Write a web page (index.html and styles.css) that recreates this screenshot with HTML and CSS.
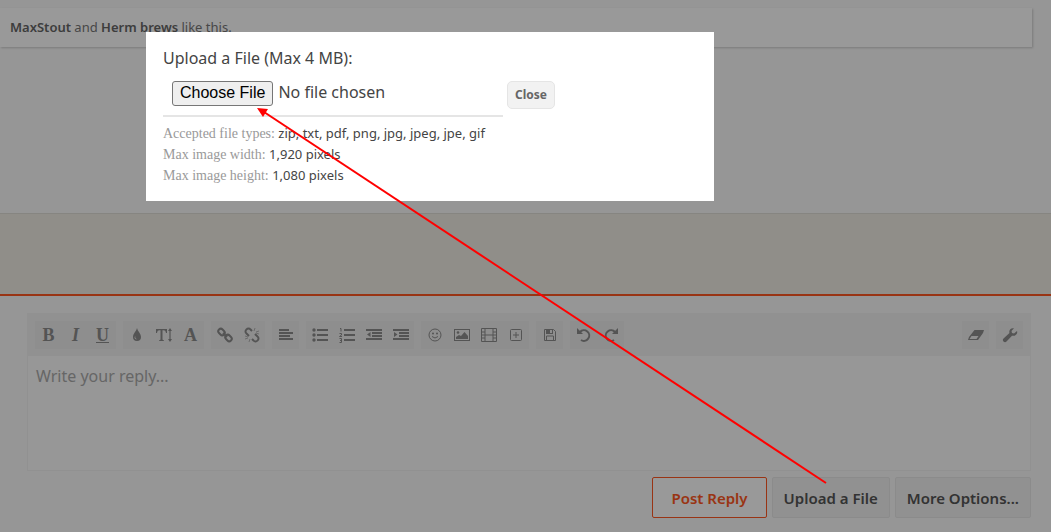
FILE: index.html
```html
<!DOCTYPE html>
<html lang="en">
<head>
    <meta charset="UTF-8">
    <meta name="viewport" content="width=device-width, initial-scale=1.0">
    <title>Reply to Thread</title>
    <link rel="stylesheet" href="styles.css">
</head>
<body>
    <main>
        <section class="message">
            <p class="likes"><a href="#">MaxStout</a> and <a href="#">Herm brews</a> like this.</p>
        </section>
        <form class="quick-reply">
            <div class="editor">
                <div class="toolbar">
                    <div class="group">
                        <button type="button" class="tool letter" aria-label="Bold"><b>B</b></button>
                        <button type="button" class="tool letter" aria-label="Italic"><i>I</i></button>
                        <button type="button" class="tool letter" aria-label="Underline"><u>U</u></button>
                    </div>
                    <div class="group">
                        <button type="button" class="tool" aria-label="Text color"><svg viewBox="0 0 16 16"><path fill-rule="evenodd" d="M8 1C7.500 4 4 6.500 4 10a4 4 0 0 0 8 0C12 6.500 8.500 4 8 1zM6.500 9a1.500 1.500 0 1 0 1.500 3 2 2 0 0 1-1.500-3z"/></svg></button>
                        <button type="button" class="tool" aria-label="Font size"><svg viewBox="0 0 16 16"><path d="M0 2h11v4h-1c-.3-2-1-2.700-2.500-2.700H6.500V12c0 1 .5 1.200 1.500 1.300v.7H3v-.7c1-.1 1.500-.3 1.500-1.300V3.300H3.500C2 3.300 1.300 4 1 6H0zM14 1l2 3h-1.400v8H16l-2 3-2-3h1.400V4H12z"/></svg></button>
                        <button type="button" class="tool letter" aria-label="Font family"><b>A</b></button>
                    </div>
                    <div class="group">
                        <button type="button" class="tool" aria-label="Link"><svg viewBox="0 0 16 16" class="line bold"><rect x="1" y="2.500" width="7" height="5" rx="2.500" transform="rotate(45 4.500 5)"/><rect x="8" y="8.500" width="7" height="5" rx="2.500" transform="rotate(45 11.500 11)"/><path d="M6 6l4 4"/></svg></button>
                        <button type="button" class="tool" aria-label="Unlink"><svg viewBox="0 0 16 16" class="line bold"><path d="M8 4L6.500 2.500a2.500 2.500 0 0 0-4 0 2.500 2.500 0 0 0 0 4L5 9M8 12l1.500 1.500a2.500 2.500 0 0 0 4 0 2.500 2.500 0 0 0 0-4L11 7"/><path stroke-width=".6" d="M10 4l1-3M12 5l3-1M6 12l-1 3M4 11l-3 1M12 6l3 1M4 10l-3-1"/></svg></button>
                    </div>
                    <div class="group">
                        <button type="button" class="tool" aria-label="Alignment"><svg viewBox="0 0 16 16"><path d="M1 2h10v2H1zM1 5h14v2H1zM1 8h11v2H1zM1 11h14v2H1z"/></svg></button>
                    </div>
                    <div class="group">
                        <button type="button" class="tool" aria-label="Unordered list"><svg viewBox="0 0 16 16"><circle cx="2" cy="3" r="1.700"/><circle cx="2" cy="8" r="1.700"/><circle cx="2" cy="13" r="1.700"/><path d="M5 2h11v2H5zM5 7h11v2H5zM5 12h11v2H5z"/></svg></button>
                        <button type="button" class="tool" aria-label="Ordered list"><svg viewBox="0 0 16 16"><path d="M5 2h11v2H5zM5 7h11v2H5zM5 12h11v2H5z"/><path class="line" d="M1 1.500h1v3M.5 6.500h2v1.500l-2 1.500h2.500M.5 11.500h2v4h-2M1 13.500h1.500"/></svg></button>
                        <button type="button" class="tool" aria-label="Outdent"><svg viewBox="0 0 16 16"><path d="M0 2h16v2H0zM6 5h10v2H6zM6 8h10v2H6zM0 11h16v2H0zM4.500 5v5L1 7.500z"/></svg></button>
                        <button type="button" class="tool" aria-label="Indent"><svg viewBox="0 0 16 16"><path d="M0 2h16v2H0zM6 5h10v2H6zM6 8h10v2H6zM0 11h16v2H0zM1 5v5l3.500-2.500z"/></svg></button>
                    </div>
                    <div class="group">
                        <button type="button" class="tool" aria-label="Smilies"><svg viewBox="0 0 16 16"><circle class="line" cx="8" cy="8" r="6"/><circle cx="6" cy="6.500" r="1"/><circle cx="10" cy="6.500" r="1"/><path class="line" d="M5 9.500q3 3 6 0"/></svg></button>
                        <button type="button" class="tool" aria-label="Image"><svg viewBox="0 0 16 16"><rect class="line" x=".5" y="2.500" width="15" height="11"/><circle cx="4" cy="5.500" r="1.300"/><path d="M2 12v-2l3-2 2 1 3.500-4L14 9v3z"/></svg></button>
                        <button type="button" class="tool" aria-label="Media"><svg viewBox="0 0 16 16"><path class="line" d="M.5 1.500h15v13H.5zM4 2v12M12 2v12M4 8h8M1 5h3M1 8h3M1 11h3M12 5h3M12 8h3M12 11h3"/></svg></button>
                        <button type="button" class="tool" aria-label="Insert"><svg viewBox="0 0 16 16"><rect class="line" x="2.500" y="2.500" width="11" height="11" rx="1"/><path class="line" d="M8 5v6M5 8h6"/></svg></button>
                    </div>
                    <div class="group">
                        <button type="button" class="tool" aria-label="Drafts"><svg viewBox="0 0 16 16"><path class="line" d="M2.500 2.500h9l2 2v9h-11zM4.500 13V9h7v4"/><path d="M4 2h7v5H4zM8 3v3h2V3z" fill-rule="evenodd"/></svg></button>
                    </div>
                    <div class="group">
                        <button type="button" class="tool" aria-label="Undo"><svg viewBox="0 0 16 16"><path class="line heavy" d="M4 5a5.300 5.300 0 1 1 1 8"/><path d="M1 1v6h6z"/></svg></button>
                        <button type="button" class="tool" aria-label="Redo"><svg viewBox="0 0 16 16"><path class="line heavy" d="M12 5a5.300 5.300 0 1 0-1 8"/><path d="M15 1v6H9z"/></svg></button>
                    </div>
                    <div class="group end">
                        <button type="button" class="tool" aria-label="Remove formatting"><svg viewBox="0 0 16 16"><path fill-rule="evenodd" d="M6.500 3H16l-1 3-5 7H0l1-3zM3.500 9L1.500 12h7l2-3z"/></svg></button>
                    </div>
                    <div class="group">
                        <button type="button" class="tool" aria-label="Toggle BB code editor"><svg viewBox="0 0 16 16"><path d="M15 4l-3 2.500-2-.5-.5-2L12 1.300C9 .5 6.500 3 7.500 6L1.500 11.500c-2 2 1 5 3 3L10 8.700c3 .8 6-1.700 5-4.700z"/></svg></button>
                    </div>
                </div>
                <textarea class="reply-text" aria-label="Reply" placeholder="Write your reply..."></textarea>
            </div>
            <div class="actions">
                <button type="submit" class="action primary">Post Reply</button>
                <button type="button" class="action upload">Upload a File</button>
                <button type="button" class="action more">More Options...</button>
            </div>
        </form>
    </main>
    <div class="overlay">
        <section class="dialog" role="dialog" aria-labelledby="upload-label">
            <label id="upload-label" for="upload">Upload a File (Max 4 MB):</label>
            <div class="upload-row">
                <input type="file" id="upload">
                <button type="button" class="close">Close</button>
            </div>
            <dl class="limits">
                <div><dt>Accepted file types:</dt> <dd>zip, txt, pdf, png, jpg, jpeg, jpe, gif</dd></div>
                <div><dt>Max image width:</dt> <dd>1,920 pixels</dd></div>
                <div><dt>Max image height:</dt> <dd>1,080 pixels</dd></div>
            </dl>
        </section>
    </div>
    <!-- arrow from the Upload a File button to the file chooser -->
    <svg class="arrow" viewBox="0 0 1051 532" aria-hidden="true">
        <path d="M826 483L264 112" stroke="#f00" stroke-width="2"/>
        <path d="M257 108l11 1-5 8z" fill="#f00"/>
    </svg>
</body>
</html>
```
FILE: styles.css
```css
* {
    box-sizing: border-box;
}

body {
    font-family: "Noto Sans", sans-serif;
    margin: 0;
    background-color: #f0ede4;
    color: #777;
    font-size: 13px;
}

button {
    font-family: inherit;
    cursor: pointer;
}

.message {
    background-color: #fafafa;
    min-height: 214px;
    padding-top: 8px;
    border-bottom: 1px solid #e0ded8;
}

.likes {
    margin: 0 19px 0 0;
    padding: 10px;
    line-height: 19px;
    background-color: #fff;
    box-shadow: 1px 1px 2px #ccc;
}

.likes a {
    color: #666;
    font-weight: 600;
    text-decoration: none;
}

.quick-reply {
    margin-top: 80px;
    padding: 17px 20px 14px 27px;
    background-color: #fafafa;
    border-top: 2px solid #ff5722;
}

.editor {
    border: 1px solid #f2f2f2;
}

.toolbar {
    display: flex;
    gap: 7px;
    padding: 7px;
    background-color: #f2f2f2;
}

.group {
    display: flex;
    background-color: #ededed;
}

.end {
    margin-left: auto;
}

.tool {
    width: 27px;
    height: 28px;
    padding: 0;
    border: none;
    background: none;
    color: #8c8c8c;
    display: flex;
    align-items: center;
    justify-content: center;
}

.tool svg {
    width: 16px;
    height: 16px;
    fill: currentColor;
}

.tool .line,
.tool svg.line {
    fill: none;
    stroke: currentColor;
}

.tool svg.bold {
    stroke-width: 2;
}

.tool .heavy {
    stroke-width: 2;
}

.letter {
    font-family: "Liberation Serif", serif;
    font-size: 18px;
    font-weight: bold;
}

.reply-text {
    display: block;
    width: 100%;
    height: 114px;
    padding: 8px;
    border: none;
    resize: none;
    background-color: #fcfcfc;
    font: 16px/24px "Noto Sans", sans-serif;
}

.reply-text::placeholder {
    color: #aaa;
}

.actions {
    display: flex;
    justify-content: flex-end;
    gap: 5px;
    padding-top: 6px;
}

.action {
    height: 41px;
    padding: 0 11px;
    border: 1px solid #e8e8e8;
    border-radius: 2px;
    background-color: #f2f2f2;
    color: #555;
    font-size: 15px;
    font-weight: 600;
}

.primary {
    padding: 0 18px;
    background-color: #fff;
    border-color: #ff5722;
    color: #ff5722;
}

.overlay {
    position: fixed;
    inset: 0;
    background-color: rgba(0, 0, 0, 0.4);
}

.dialog {
    width: 54%;
    margin: 32px auto 0 146px;
    padding: 14px 17px 15px;
    background-color: #fff;
    color: #444;
}

.dialog label {
    display: block;
    font-size: 16px;
    line-height: 24px;
}

.upload-row {
    display: flex;
    align-items: center;
    gap: 4px;
    padding-top: 2px;
}

.upload-row input {
    width: 340px;
    height: 45px;
    padding: 8px 9px;
    border-bottom: 2px solid #e5e5e5;
    color: #444;
    font: 16px/24px "Noto Sans", sans-serif;
}

.upload-row input::file-selector-button {
    height: 25px;
    padding: 0 7px;
    margin-right: 5px;
    border: 1px solid #767676;
    border-radius: 3px;
    background-color: #efefef;
    color: #000;
    font: 16px "Liberation Sans", sans-serif;
}

.close {
    height: 28px;
    padding: 0 7px;
    border: 1px solid #e5e5e5;
    border-radius: 5px;
    background-color: #f2f2f2;
    color: #666;
    font-size: 12px;
    font-weight: bold;
}

.limits {
    margin: 6px 0 0;
    line-height: 21px;
}

.limits dt,
.limits dd {
    display: inline;
    margin: 0;
}

.limits dt {
    color: #999;
    font-family: "Liberation Serif", serif;
    font-size: 14px;
}

.arrow {
    position: absolute;
    top: 0;
    left: 0;
    width: 100%;
    pointer-events: none;
}
```
